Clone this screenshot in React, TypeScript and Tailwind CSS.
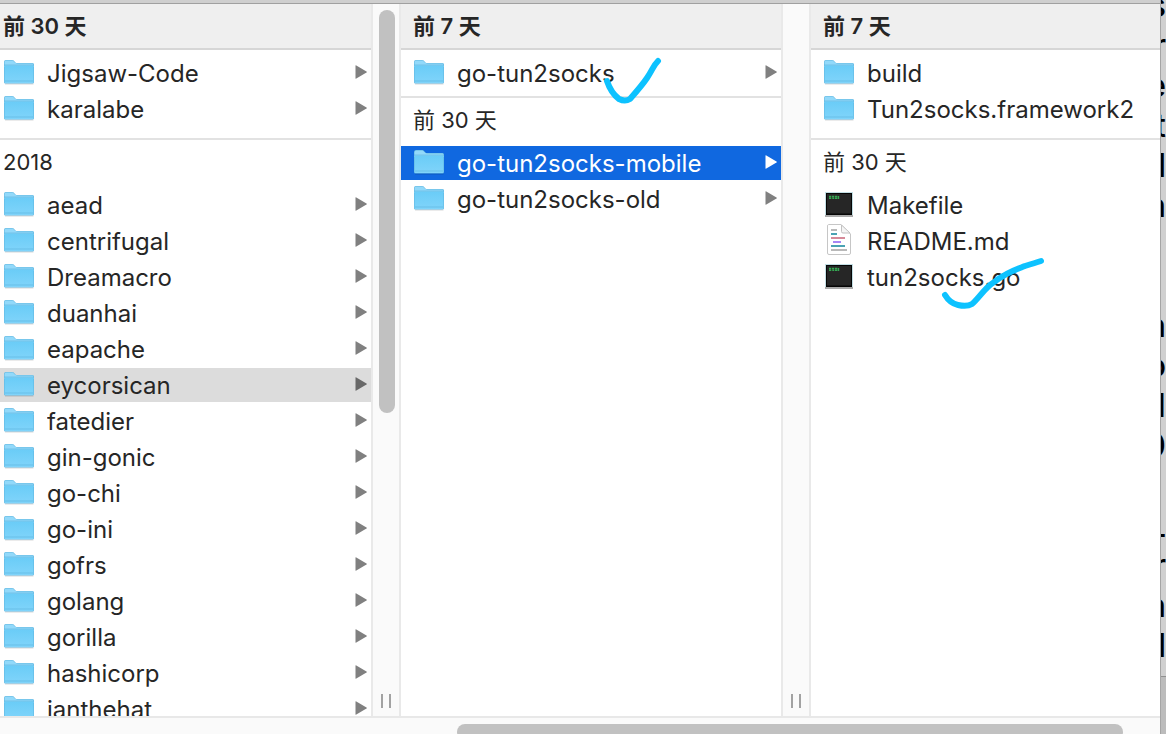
import React from 'react';

type Kind = 'folder' | 'exec' | 'doc';
type Entry = { name: string; kind?: Kind; state?: 'selected' | 'path'; mark?: React.ReactNode };

function Folder() {
  return (
    <svg className="block h-9 w-8" viewBox="0 0 32 36" aria-hidden="true">
      <defs>
        <linearGradient id="front" x1="0" y1="0" x2="0" y2="1">
          <stop offset="0" stopColor="#6accf7" />
          <stop offset="1" stopColor="#80d4fa" />
        </linearGradient>
      </defs>
      <path d="M1 27.5h28.500v1H1z" fill="#000" opacity=".16" />
      <path d="M0 6a2 2 0 0 1 2-2h6c1.500 0 2 .8 2.700 1.700S12 7 13 7h15.500A1.500 1.500 0 0 1 30 8.500V26a1.500 1.500 0 0 1-1.500 1.500h-27A1.500 1.500 0 0 1 0 26z" fill="#5eb4de" />
      <path d="M.5 6.200A1.700 1.700 0 0 1 2 4.500h6c1.200 0 1.700.7 2.400 1.600S12 7.500 13 7.500h15.500a1 1 0 0 1 1 1V11H.5z" fill="#92d9fa" />
      <path d="M.5 9.500h29V26a1 1 0 0 1-1 1h-27a1 1 0 0 1-1-1z" fill="url(#front)" />
      <path d="M0 9h30M1 25h28" stroke="#58afda" strokeWidth="1" opacity=".55" />
    </svg>
  );
}

function Exec() {
  return (
    <svg className="block h-9 w-8" viewBox="0 0 32 36" aria-hidden="true">
      <path d="M1 4h28v25H1z" fill="#c3dfe5" />
      <path d="M1 27h28v2H1z" fill="#aaa" />
      <path d="M2 5h26v22H2z" fill="#060606" />
      <path d="M3 6h24v19.500H3z" fill="#262626" />
      <path d="M5 8.500h2.300M5 10.200h2.300M8 8.500h2.300M8.300 10.200h2M11 8.500h2.300M11 10.200h2.300M14.500 8v3" stroke="#35a852" strokeWidth="1.400" />
    </svg>
  );
}

function Doc() {
  return (
    <svg className="block h-9 w-8" viewBox="0 0 32 36" aria-hidden="true">
      <path d="M4.500.5H17L26.500 10v19a1.500 1.500 0 0 1-1.500 1.500H5A1.500 1.500 0 0 1 3.500 29V2A1.500 1.500 0 0 1 4.500.5z" fill="#fff" stroke="#c6c6c6" />
      <path d="M17.500 1v6.500a1.500 1.500 0 0 0 1.500 1.500h7z" fill="#f5f5f5" stroke="#c2c2c2" />
      <g strokeWidth="2">
        <path d="M7 6h6M7 26h16" stroke="#b9b9b9" />
        <path d="M7 10h6M7 22h14" stroke="#4ba3b3" />
        <path d="M7 14h14" stroke="#d68a99" />
        <path d="M9 18h8" stroke="#a787f5" />
      </g>
    </svg>
  );
}

function Row({ name, kind = 'folder', state, mark }: Entry) {
  const tone =
    state === 'selected' ? 'bg-[#1068e0] text-white' : state === 'path' ? 'bg-[#dcdcdc] text-[#262626]' : 'text-[#262626]';
  const arrow = state === 'selected' ? 'text-white' : state === 'path' ? 'text-[#686868]' : 'text-[#808080]';
  return (
    <li className="relative mb-0.5">
      <button type="button" className={`flex h-[34px] w-full items-start pr-1 text-left group-data-[inset=true]:pl-[13px] group-data-[inset=false]:pl-1 ${tone}`}>
        <span className="mr-[11px] h-[34px] w-8 shrink-0">
          {kind === 'folder' ? <Folder /> : kind === 'exec' ? <Exec /> : <Doc />}
        </span>
        <span className="grow truncate leading-9">{name}</span>
        {kind === 'folder' && name !== 'build' && !name.includes('.') && (
          <svg className={`mt-[9px] h-3.5 w-3 shrink-0 ${arrow}`} viewBox="0 0 12 14" aria-hidden="true">
            <path d="M.5 0.800Q.5 0 1.300.4L11.500 6.500q.7.500 0 1L1.300 13.600Q.5 14 .5 13.200z" fill="currentColor" />
          </svg>
        )}
      </button>
      {mark}
    </li>
  );
}

function Title({ children }: { children: React.ReactNode }) {
  return (
    <h2 className="h-[46px] border-b-2 border-[#d6d6d6] bg-[#efefef] text-[22px] font-semibold leading-[44px] group-data-[inset=true]:pl-3 group-data-[inset=false]:pl-[3px]">
      {children}
    </h2>
  );
}

function Section({ children }: { children: React.ReactNode }) {
  return (
    <h3 className="h-[50px] border-t-2 border-[#e2e2e2] text-[22px] leading-[44px] group-data-[inset=true]:pl-3 group-data-[inset=false]:pl-[3px]">
      {children}
    </h3>
  );
}

function Divider({ thumb = false }: { thumb?: boolean }) {
  return (
    <div className="flex flex-col items-center justify-between border-x-2 border-[#e9e9e9] bg-[#fafafa] pb-2 pt-1.5">
      <div className={thumb ? 'ml-px h-[403px] w-4 rounded-full bg-[#c1c1c1]' : ''} />
      <button type="button" aria-label="调整列宽" className="h-3.5 w-2.5 border-x-2 border-[#a2a2a2]" />
    </div>
  );
}

const recent: Entry[] = [{ name: 'Jigsaw-Code' }, { name: 'karalabe' }];
const older: Entry[] = [
  { name: 'aead' },
  { name: 'centrifugal' },
  { name: 'Dreamacro' },
  { name: 'duanhai' },
  { name: 'eapache' },
  { name: 'eycorsican', state: 'path' },
  { name: 'fatedier' },
  { name: 'gin-gonic' },
  { name: 'go-chi' },
  { name: 'go-ini' },
  { name: 'gofrs' },
  { name: 'golang' },
  { name: 'gorilla' },
  { name: 'hashicorp' },
  { name: 'ianthehat' },
];
const behind = ['s', 'r', 'e', 't', 'l', 'n', '', '', 'n', 'o', 'M', '0', '', 'L', 'r', 'h', 'l'];

const list = (items: Entry[]) => items.map((e) => <Row key={e.name} {...e} />);

export default function App() {
  return (
    <div className="flex h-screen overflow-hidden bg-[#d0d0d0] font-['Inter','Noto_Sans_CJK_SC',sans-serif] text-[24px] text-[#262626]">
      <main className="flex min-w-0 grow flex-col">
        <div className="h-1 shrink-0 border-b border-[#a0a0a0] bg-[#cfcfcf]" />
        <div className="grid min-h-0 grow grid-cols-[371fr_30px_380fr_30px_349fr] overflow-hidden bg-white">
          <section data-inset="false" className="group min-w-0 overflow-hidden">
            <Title>前 30 天</Title>
            <ul className="pb-2.5 pt-1.5">{list(recent)}</ul>
            <Section>2018</Section>
            <ul>{list(older)}</ul>
          </section>
          <Divider thumb />
          <section data-inset="true" className="group min-w-0">
            <Title>前 7 天</Title>
            <ul className="pb-1 pt-1.5">
              <Row
                name="go-tun2socks"
                mark={
                  <svg className="absolute left-[200px] top-0 h-12 w-16" viewBox="0 0 64 48" fill="none" aria-hidden="true">
                    <path d="M6 25C9 34 14 40 18 43Q24 46 29 43C36 35 42 28 46 22C52 13 52 10 57 5" stroke="#0dc2ff" strokeWidth="6" strokeLinecap="round" strokeLinejoin="round" />
                  </svg>
                }
              />
            </ul>
            <Section>前 30 天</Section>
            <ul>{list([{ name: 'go-tun2socks-mobile', state: 'selected' }, { name: 'go-tun2socks-old' }])}</ul>
          </section>
          <Divider />
          <section data-inset="true" className="group min-w-0">
            <Title>前 7 天</Title>
            <ul className="pb-2.5 pt-1.5">{list([{ name: 'build' }, { name: 'Tun2socks.framework2' }])}</ul>
            <Section>前 30 天</Section>
            <ul>
              <Row name="Makefile" kind="exec" />
              <Row name="README.md" kind="doc" />
              <Row
                name="tun2socks.go"
                kind="exec"
                mark={
                  <svg className="absolute -top-1 left-[128px] h-14 w-28" viewBox="0 0 112 56" fill="none" aria-hidden="true">
                    <path d="M6 39C9 44 14 48 19 49Q28 51 33 48C39 43 43 36 51 29C66 17 76 14 86 10Q96 7 102 5" stroke="#0dc2ff" strokeWidth="6" strokeLinecap="round" strokeLinejoin="round" />
                  </svg>
                }
              />
            </ul>
          </section>
        </div>
        <div className="h-[18px] shrink-0 overflow-hidden border-t-2 border-[#e8e8e8] bg-[#fafafa] pl-[39.4%] pr-[37px] pt-1.5">
          <div className="h-4 rounded-full bg-[#c1c1c1]" />
        </div>
      </main>
      <aside className="flex w-1.5 shrink-0 flex-col overflow-hidden border-l border-[#a5a5a5] bg-[#bcbcbc]" aria-hidden="true">
        <div className="h-[677px] shrink-0 overflow-hidden border-b border-[#909090] bg-[#d0d0d0] text-[32px] font-medium text-black">
          <div className="-mt-3.5 flex flex-col items-end">
            {behind.map((c, i) => (
              <span key={i} className="block h-10 leading-10">{c}</span>
            ))}
          </div>
        </div>
      </aside>
    </div>
  );
}
